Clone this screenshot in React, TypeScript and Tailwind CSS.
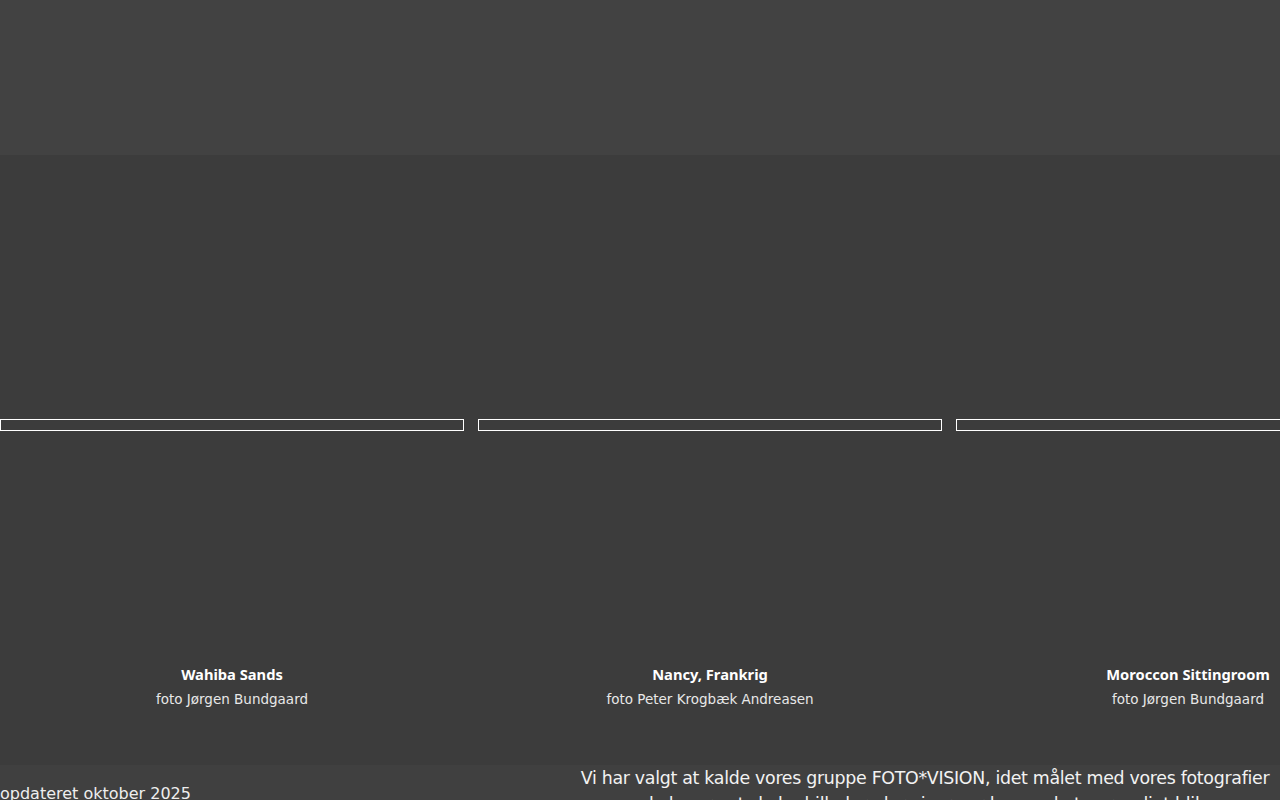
const works = [
  { title: "Wahiba Sands", by: "foto Jørgen Bundgaard" },
  { title: "Nancy, Frankrig", by: "foto Peter Krogbæk Andreasen" },
  { title: "Moroccon Sittingroom", by: "foto Jørgen Bundgaard" },
];

export default function App() {
  return (
    <div className="w-[1280px] h-[800px] overflow-hidden bg-[#404040] text-white font-['DejaVu_Sans','Noto_Sans',sans-serif]">
      {/* HEADER */}
      <div className="h-[155px] bg-[#424242]" />

      {/* GALLERY */}
      <div className="h-[610px] bg-[#3c3c3c] pt-[264px] overflow-hidden">
        <div className="flex gap-[14px]">
          {works.map((w) => (
            <div key={w.title} className="w-[464px] shrink-0 flex flex-col items-center">
              <div className="w-full h-[12px] border border-white" />
              <div className="h-[233px]" />
              <h3 className="font-['Noto_Sans',sans-serif] text-[14.7px] leading-[20px] font-bold">{w.title}</h3>
              <p className="mt-[7px] text-[13.5px] leading-[16px] text-[#e8e8e8]">{w.by}</p>
            </div>
          ))}
        </div>
      </div>

      {/* FOOTER */}
      <div className="flex">
        <div className="w-[570px] shrink-0 pt-[19px] text-[16px] leading-[20px] text-[#eeeeee]">
          opdateret oktober 2025
        </div>
        <p className="flex-1 pt-0 text-center text-[17.4px] leading-[26px] text-[#f2f2f2] tracking-[-0.3px] whitespace-nowrap">
          Vi har valgt at kalde vores gruppe FOTO*VISION, idet målet med vores fotografier
          <br />
          skal være at skabe billeder, der viser verden med et personligt blik.
        </p>
      </div>
    </div>
  );
}
